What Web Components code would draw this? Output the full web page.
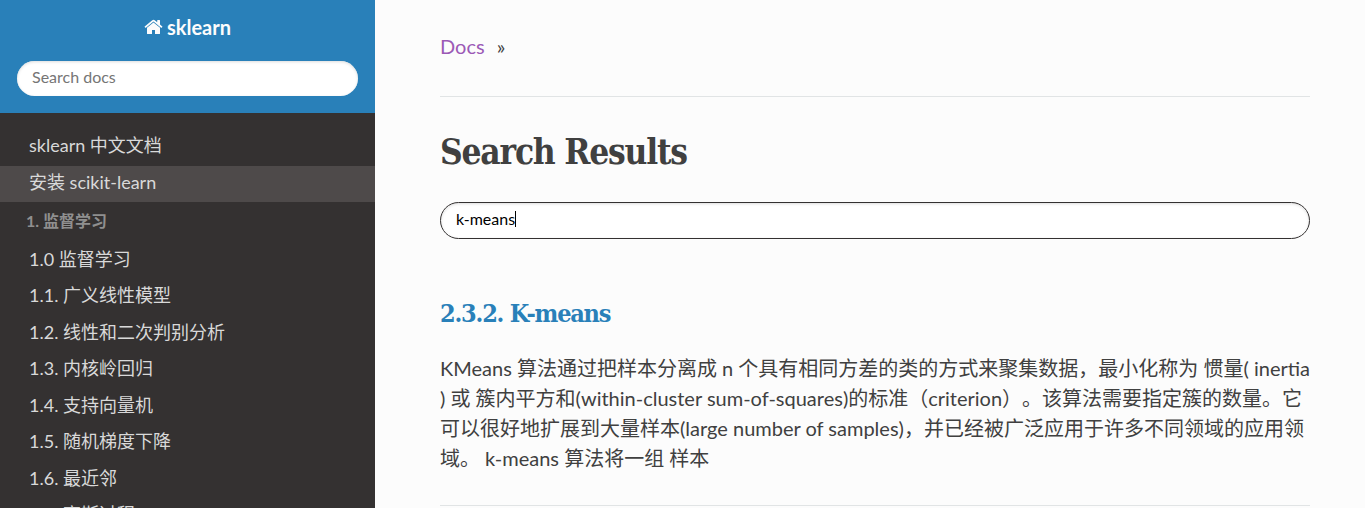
<!DOCTYPE html>
<html lang="zh-CN"><head><meta charset="utf-8"><title>Search Results — sklearn</title>
<style>
html,body{margin:0;height:100%;overflow:hidden}
body{font-family:Lato,"Noto Sans CJK SC",sans-serif;font-size:20px;color:#404040;background:#fcfcfc;text-spacing-trim:space-all}
</style></head><body>
<docs-page>
  <docs-sidebar slot="side">
    <nav-item raised>sklearn 中文文档</nav-item>
    <nav-item raised active>安装 scikit-learn</nav-item>
    <nav-caption>1. 监督学习</nav-caption>
    <nav-item>1.0 监督学习</nav-item>
    <nav-item>1.1. 广义线性模型</nav-item>
    <nav-item>1.2. 线性和二次判别分析</nav-item>
    <nav-item>1.3. 内核岭回归</nav-item>
    <nav-item>1.4. 支持向量机</nav-item>
    <nav-item>1.5. 随机梯度下降</nav-item>
    <nav-item>1.6. 最近邻</nav-item>
    <nav-item>1.7. 高斯过程</nav-item>
  </docs-sidebar>
  <bread-crumbs>Docs</bread-crumbs>
  <page-title>Search Results</page-title>
  <search-box focused>k-means</search-box>
  <search-result>
    <span slot="title">2.3.2. K-means</span>
    <text-line>KMeans 算法通过把样本分离成 n 个具有相同方差的类的方式来聚集数据，最小化称为 惯量( inertia</text-line>
    <text-line>) 或 簇内平方和(within-cluster sum-of-squares)的标准（criterion）。该算法需要指定簇的数量。它</text-line>
    <text-line>可以很好地扩展到大量样本(large number of samples)，并已经被广泛应用于许多不同领域的应用领</text-line>
    <text-line>域。 k-means 算法将一组 样本</text-line>
  </search-result>
</docs-page>
<script>
const define = (name, html) => customElements.define(name, class extends HTMLElement {
  constructor(){ super(); this.attachShadow({mode:'open'}).innerHTML = html; }
});
define('docs-page', `<style>:host{display:grid;grid-template-columns:375px 1fr;height:100vh;overflow:hidden}
main{box-sizing:border-box;padding:31px 55px 0 65px;min-width:0}</style>
<slot name="side"></slot><main><slot></slot></main>`);
define('docs-sidebar', `<style>:host{display:block;background:#343131;height:100vh;overflow:hidden}
header{box-sizing:border-box;height:113px;background:#2980b9;padding:15px 17px 0;margin-bottom:16px}
a{display:flex;justify-content:center;align-items:center;gap:4px;height:24px;margin-bottom:22px;color:#fcfcfc;font-weight:700;font-size:20px}
svg{width:19px;height:16px}</style>
<header><a><svg viewBox="0 0 19 16" fill="#fcfcfc"><path d="M9.5 3.5 3 8.8V14.4q0 .7.7.7H8V10.9h3v4.2h4.3q.7 0 .7-.7V8.8z"/><path d="M18.3 7.5 16 5.6V1.4q0-.4-.4-.4h-2q-.4 0-.4.4v1.9L10.7 1.2Q9.5.3 8.3 1.2L.7 7.5q-.3.2 0 .5l.6.7q.3.3.6 0L9.5 2.5l7.6 6.2q.3.3.6 0l.6-.7q.3-.3 0-.5z"/></svg><span>sklearn</span></a><search-box>Search docs</search-box></header>
<nav><slot></slot></nav>`);
define('nav-item', `<style>:host{display:flex;align-items:center;box-sizing:border-box;height:36.5px;padding:0 29px 2px;font-size:18px;line-height:22px;color:#d9d9d9;white-space:nowrap}
:host([raised]){padding-bottom:4px}
:host([active]){background:#4e4a4a}</style><slot></slot>`);
define('nav-caption', `<style>:host{display:block;height:39.5px;line-height:37px;padding:0 26px;font-size:16px;font-weight:700;color:#8f8f8f;white-space:nowrap}</style><slot></slot>`);
define('search-box', `<style>:host{display:flex;align-items:center;box-sizing:border-box;height:35px;padding:0 15px 4px;border-radius:18px;background:#fff;box-shadow:inset 0 1px 3px #ddd;color:#757575;font-size:16px}
:host([focused]){height:37px;border:1px solid #343131;border-radius:19px;color:#000}
i{display:none;width:1px;height:16px;background:#000}
:host([focused]) i{display:block}</style><slot></slot><i></i>`);
define('bread-crumbs', `<style>:host{display:block;height:65px;line-height:30px;border-bottom:1px solid #e1e4e5}
a{color:#9b59b6;margin-right:12px}</style><a><slot></slot></a><span>»</span>`);
define('page-title', `<style>:host{display:block;height:105px;font:700 35px/110px "Roboto Slab","DejaVu Serif",serif;font-stretch:condensed;letter-spacing:-1.22px;white-space:nowrap}</style><slot></slot>`);
define('search-result', `<style>:host{display:block;height:266px;border-bottom:1px solid #e1e4e5}
h2{margin:0;padding-top:59px;height:55px;font:700 25px/32px "Roboto Slab","DejaVu Serif",serif;font-stretch:condensed;letter-spacing:-1.2px;color:#2980b9;white-space:nowrap}
</style><h2><slot name="title"></slot></h2><slot></slot>`);
define('text-line', `<style>:host{display:block;height:30px;line-height:30px;white-space:nowrap}</style><slot></slot>`);
</script></body></html>
